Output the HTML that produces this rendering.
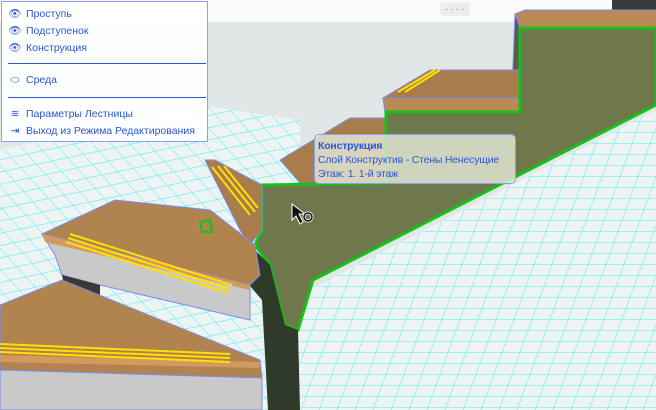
<!DOCTYPE html>
<html><head><meta charset="utf-8"><style>
html,body{margin:0;padding:0;width:656px;height:410px;overflow:hidden;background:#e1e6e6;font-family:"Liberation Sans",sans-serif}
svg{position:absolute;left:0;top:0}
.menu{position:absolute;left:1px;top:1px;width:207px;height:141px;background:rgba(255,255,255,.93);border:1px solid #8aa0f0;box-sizing:border-box;font-size:10.5px;color:#2b56d8}
.menu div.i{position:absolute;left:6px;height:16px;line-height:16px;white-space:nowrap}
.menu .i span{display:inline-block;width:14px;margin-right:4px;text-align:center}
.menu hr{position:absolute;left:6px;width:198px;border:0;border-top:1px solid #2b56d8;margin:0}
.tip{position:absolute;left:314px;top:134px;width:202px;height:50px;background:rgba(225,228,210,.85);border:1px solid #8aa0f0;border-radius:5px;box-sizing:border-box;font-size:10.5px;color:#2b56d8;padding:4px 3px;line-height:14px;white-space:nowrap;letter-spacing:-0.2px}
</style></head><body>
<svg width="656" height="410" viewBox="0 0 656 410">
<defs>
<pattern id="gr" width="18" height="11" patternUnits="userSpaceOnUse" patternTransform="skewX(-20)">
<path d="M0 0H18M0 0V11" stroke="#3ff0f0" stroke-width="1" fill="none"/></pattern>
<pattern id="gl" width="16" height="12" patternUnits="userSpaceOnUse" patternTransform="rotate(-12) skewX(30)">
<path d="M0 0H16M0 0V12" stroke="#3ff0f0" stroke-width="1" fill="none"/></pattern>
</defs>
<rect x="0" y="0" width="656" height="22" fill="#fbfbfb"/>
<rect x="440" y="2" width="30" height="14" rx="3" fill="#eeeeee"/>
<text x="445" y="12" font-size="9" fill="#f08030" font-family="Liberation Sans">- - - -</text>
<polygon points="0,150 200,105 300,120 300,410 0,410" fill="#eef3f3"/>
<polygon points="0,150 200,105 300,120 300,410 0,410" fill="url(#gl)"/>
<polygon points="290,300 656,110 656,410 290,410" fill="#eef3f3"/>
<polygon points="290,300 656,110 656,410 290,410" fill="url(#gr)"/>
<!-- top right tread -->
<rect x="612" y="0" width="44" height="10" fill="#3a3a3a"/>
<polygon points="515,14 525,10 656,10 656,28 520,28" fill="#b98a55" stroke="#7d8af0"/>
<polygon points="515,14 520,28 520,90 512,90" fill="#5a5a52" stroke="#7d8af0"/>
<!-- middle tread -->
<polygon points="383,98 430,70 518,70 520,98" fill="#a97c4c" stroke="#7d8af0"/>
<polygon points="383,98 520,98 520,112 385,112" fill="#b98a55" stroke="#7d8af0"/>
<line x1="398" y1="92" x2="435" y2="70" stroke="#ffe000" stroke-width="2"/>
<line x1="405" y1="92" x2="440" y2="70" stroke="#ffe000" stroke-width="2"/>
<!-- lower tread near tip -->
<polygon points="280,160 350,118 386,118 386,183 300,183" fill="#a97c4c" stroke="#7d8af0"/>
<!-- stringer -->
<polygon points="262,185 386,183 386,112 520,112 520,28 656,28 656,105 313,280 298,330 285,325 270,265 255,245 262,230" fill="#6f774d" stroke="#16c116" stroke-width="3"/>
<!-- left stacked treads -->
<polygon points="205,160 215,160 262,185 262,230 250,245 240,230" fill="#a97c4c" stroke="#7d8af0"/>
<line x1="212" y1="167" x2="250" y2="215" stroke="#ffe000" stroke-width="2"/>
<line x1="218" y1="166" x2="255" y2="212" stroke="#ffe000" stroke-width="2"/>
<line x1="224" y1="166" x2="258" y2="208" stroke="#ffe000" stroke-width="2"/>
<polygon points="250,245 270,265 285,325 298,330 300,410 268,410 262,300 245,280" fill="#2f3a2a"/>
<!-- upper winder tread -->
<polygon points="42,234 115,200 210,210 255,245 260,275 250,285" fill="#b0834f" stroke="#7d8af0"/>
<polygon points="42,234 250,285 250,320 100,285 62,275 55,255" fill="#c9c9c9" stroke="#7d8af0"/>
<polygon points="42,234 250,285 250,290 45,242" fill="#d39a60"/>
<line x1="70" y1="234" x2="232" y2="285" stroke="#ffe000" stroke-width="2"/>
<line x1="68" y1="238" x2="230" y2="289" stroke="#ffe000" stroke-width="2"/>
<line x1="66" y1="242" x2="228" y2="293" stroke="#ffe000" stroke-width="2"/>
<polygon points="200,222 210,220 212,232 202,232" fill="none" stroke="#16c116" stroke-width="2"/>
<polygon points="62,275 100,285 100,295 65,290" fill="#3a3a32"/>
<!-- lower winder tread -->
<polygon points="0,305 62,280 260,360 262,378 0,370" fill="#b0834f" stroke="#7d8af0"/>
<polygon points="0,370 262,378 262,410 0,410" fill="#c9c9c9" stroke="#7d8af0"/>
<polygon points="0,355 260,362 260,368 0,362" fill="#d39a60"/>
<line x1="0" y1="348" x2="230" y2="358" stroke="#ffe000" stroke-width="2"/>
<line x1="0" y1="352" x2="230" y2="362" stroke="#ffe000" stroke-width="2"/>
<line x1="0" y1="344" x2="230" y2="354" stroke="#ffe000" stroke-width="2"/>
<!-- cursor -->
<polygon points="292,204 292,220 296,216 300,224 303,222 299,214 305,214" fill="#111" stroke="#fff"/>
<circle cx="308" cy="217" r="4" fill="none" stroke="#fff" stroke-width="3"/>
<circle cx="308" cy="217" r="4" fill="none" stroke="#111" stroke-width="1.5"/>
</svg>
<div class="menu">
<div class="i" style="top:4px"><span>👁</span>Проступь</div>
<div class="i" style="top:21px"><span>👁</span>Подступенок</div>
<div class="i" style="top:38px"><span>👁</span>Конструкция</div>
<hr style="top:61px">
<div class="i" style="top:70px"><span>⬭</span>Среда</div>
<hr style="top:95px">
<div class="i" style="top:104px"><span>≋</span>Параметры Лестницы</div>
<div class="i" style="top:121px"><span>⇥</span>Выход из Режима Редактирования</div>
</div>
<div class="tip"><b>Конструкция</b><br>Слой Конструктив - Стены Ненесущие<br>Этаж: 1. 1-й этаж</div>
</body></html>
